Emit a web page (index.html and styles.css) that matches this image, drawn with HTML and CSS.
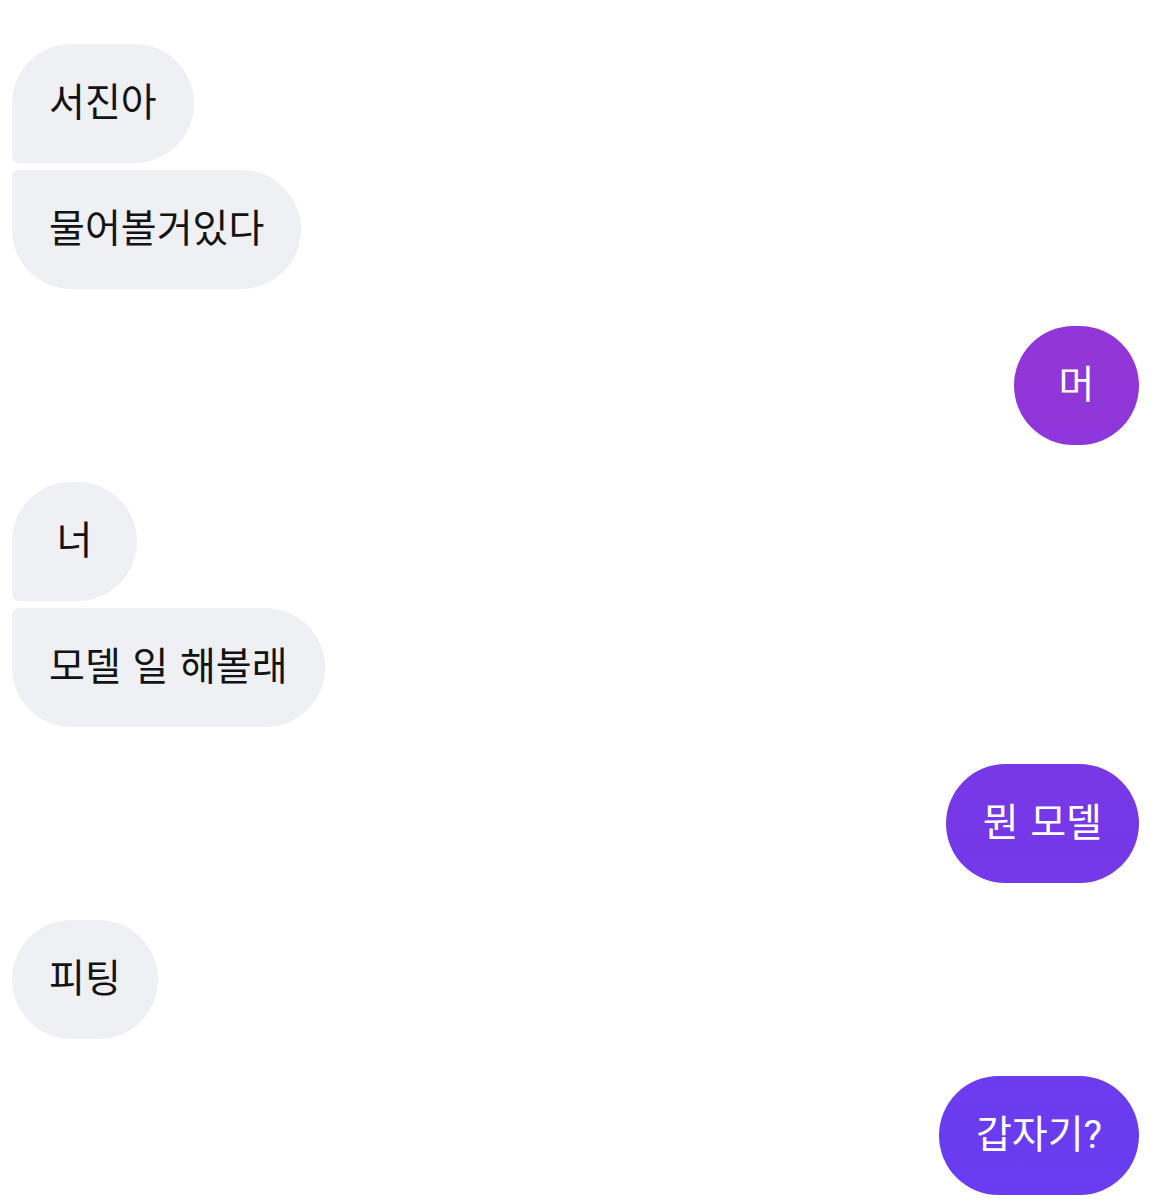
FILE: index.html
```html
<!DOCTYPE html>
<html lang="ko">
	<head>
		<title>Chat</title>
		<meta charset="utf-8">
		<link rel="stylesheet" href="styles.css">
	</head>

	<body>

	<div class="chat">
		<div class="group">
			<div class="bubble them first">서진아</div>
			<div class="bubble them last">물어볼거있다</div>
		</div>

		<div class="group mine">
			<div class="bubble me">머</div>
		</div>

		<div class="group">
			<div class="bubble them first">너</div>
			<div class="bubble them last">모델 일 해볼래</div>
		</div>

		<div class="group mine">
			<div class="bubble me">뭔 모델</div>
		</div>

		<div class="group">
			<div class="bubble them">피팅</div>
		</div>

		<div class="group mine">
			<div class="bubble me">갑자기?</div>
		</div>
	</div>

	</body>
</html>
```

FILE: styles.css
```css
body {
	margin: 0;
	background-color: #ffffff;
	font-family: Roboto, "Noto Sans CJK KR", sans-serif;
}

.chat {
	display: flex;
	flex-direction: column;
	gap: 37px;
	padding: 44px 25px 0 12px;
}

.group {
	display: flex;
	flex-direction: column;
	align-items: flex-start;
	gap: 7px;
}

.group.mine {
	align-items: flex-end;
}

.bubble {
	box-sizing: border-box;
	height: 119px;
	min-width: 125px;
	padding: 0 37px 9px;
	display: flex;
	align-items: center;
	justify-content: center;
	font-size: 39px;
	word-spacing: 2px;
	border-radius: 60px;
	white-space: nowrap;
}

/* grey bubbles on the left */
.them {
	background-color: #eff0f4;
	color: #131313;
}

.them.first {
	border-bottom-left-radius: 7px;
}

.them.last {
	border-top-left-radius: 7px;
}

/* purple bubbles on the right */
.me {
	color: #ffffff;
	background-image: linear-gradient(180deg, #9a33d6 0%, #9136d8 32%, #7638e8 68%, #683df1 100%);
	background-attachment: fixed;
}
```
